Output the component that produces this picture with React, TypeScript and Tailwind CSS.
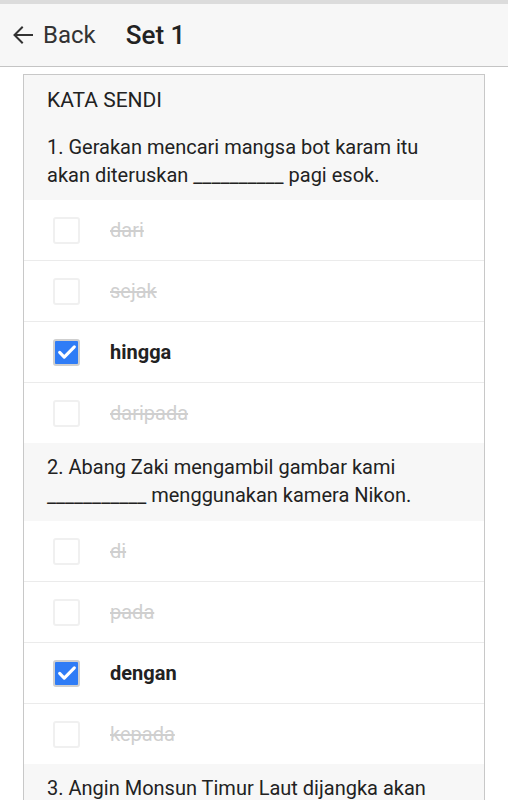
type Option = { label: string; checked: boolean };
type Question = { id: number; text: string; options: Option[] };

const questions: Question[] = [
  {
    id: 1,
    text: "1. Gerakan mencari mangsa bot karam itu akan diteruskan __________ pagi esok.",
    options: [
      { label: "dari", checked: false },
      { label: "sejak", checked: false },
      { label: "hingga", checked: true },
      { label: "daripada", checked: false },
    ],
  },
  {
    id: 2,
    text: "2. Abang Zaki mengambil gambar kami ___________ menggunakan kamera Nikon.",
    options: [
      { label: "di", checked: false },
      { label: "pada", checked: false },
      { label: "dengan", checked: true },
      { label: "kepada", checked: false },
    ],
  },
  {
    id: 3,
    text: "3. Angin Monsun Timur Laut dijangka akan membawa hujan lebat.",
    options: [],
  },
];

function Checkbox({ checked }: { checked: boolean }) {
  if (checked) {
    return (
      <span className="flex h-[27px] w-[27px] items-center justify-center rounded-[3px] border-2 border-[#cfcfcf] bg-[#2f7cf6]">
        <svg viewBox="0 0 24 24" className="h-[22px] w-[22px]" fill="none" stroke="white" strokeWidth="3.4" strokeLinecap="round" strokeLinejoin="round">
          <path d="M4 12.5l5 5L20 6.5" />
        </svg>
      </span>
    );
  }
  return <span className="block h-[27px] w-[27px] rounded-[3px] border-2 border-[#f0f0f0] bg-white" />;
}

function App() {
  return (
    <div className="min-h-screen bg-white text-[#222]" style={{ fontFamily: "Roboto, 'Noto Sans', sans-serif" }}>
      <div className="h-[4px] bg-[#dcdcdc]" />
      <header className="flex h-[63px] items-center border-b border-[#c4c4c4] bg-[#f7f7f7] px-[11px]">
        <div className="flex items-center gap-[8px] text-[#333]">
          <svg viewBox="0 0 24 24" className="h-[24px] w-[24px]" fill="none" stroke="currentColor" strokeWidth="2" strokeLinecap="square">
            <path d="M21 12H4M11 4.5L3.5 12l7.5 7.5" />
          </svg>
          <span className="text-[24px] leading-none">Back</span>
        </div>
        <h1 className="ml-[30px] text-[26px] font-medium leading-none text-[#222]">Set 1</h1>
      </header>

      <main className="px-[23px] pt-[7px]">
        <div className="border border-[#c8c8c8] bg-[#f7f7f7]">
          <div className="px-[23px] pt-[11px] text-[21px] leading-[28px]">KATA SENDI</div>
          {questions.map((q, qi) => (
            <section key={q.id}>
              <p className={`px-[23px] text-[20px] leading-[28px] ${qi === 0 ? "pt-[19px] pb-[11px]" : "pt-[10px] pb-[12px]"}`}>
                {q.text}
              </p>
              {q.options.length > 0 && (
                <ul className="bg-white">
                  {q.options.map((o, i) => (
                    <li
                      key={o.label}
                      className={`flex items-center pl-[29px] ${i > 0 ? "h-[61px] border-t border-[#ebebeb]" : "h-[60px]"}`}
                    >
                      <Checkbox checked={o.checked} />
                      <span
                        className={`ml-[30px] text-[20px] ${o.checked ? "font-bold text-[#222]" : "text-[#cfcfcf] line-through"}`}
                      >
                        {o.label}
                      </span>
                    </li>
                  ))}
                </ul>
              )}
            </section>
          ))}
        </div>
      </main>
    </div>
  );
}

export default App;
